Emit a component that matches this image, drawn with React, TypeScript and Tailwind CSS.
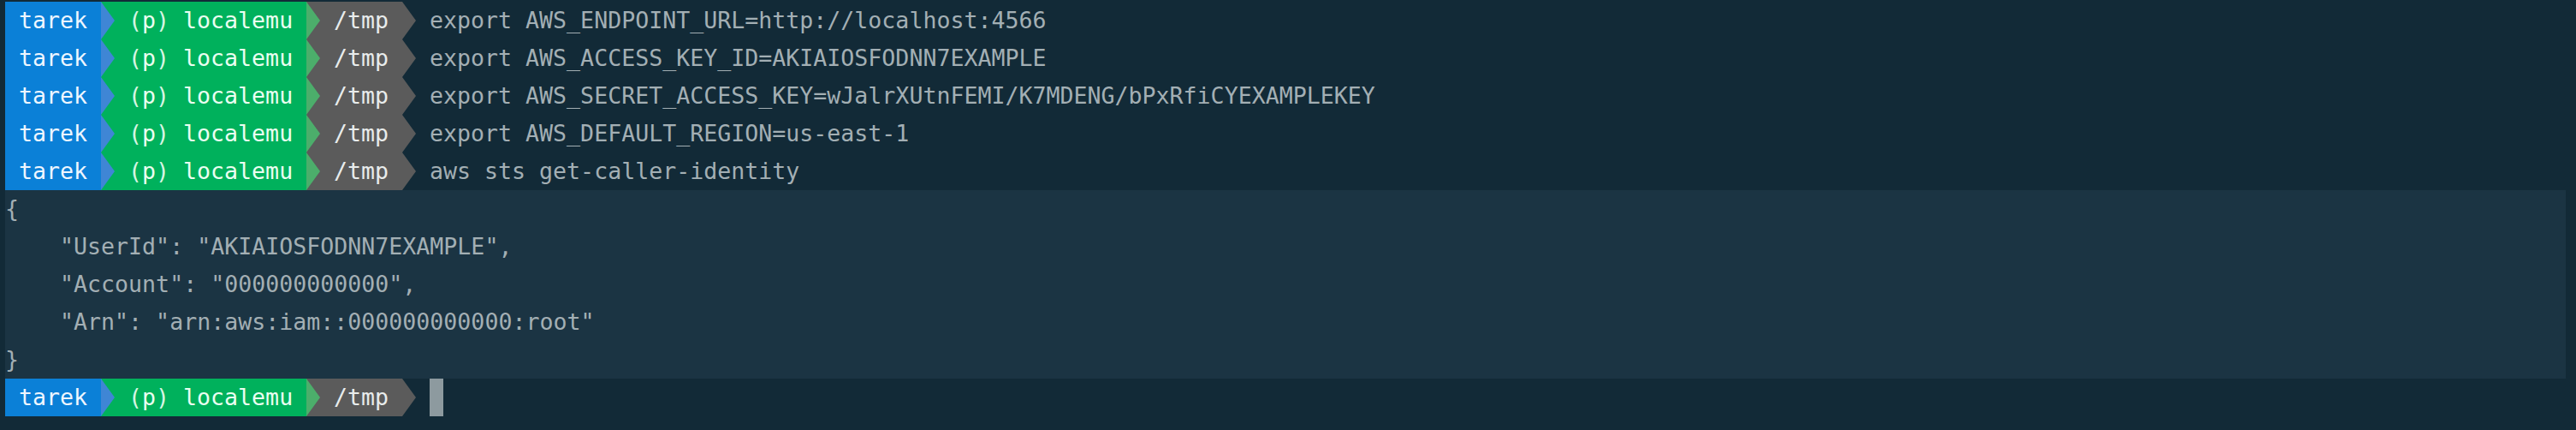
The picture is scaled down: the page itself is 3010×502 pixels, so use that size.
const commands = [
  "export AWS_ENDPOINT_URL=http://localhost:4566",
  "export AWS_ACCESS_KEY_ID=AKIAIOSFODNN7EXAMPLE",
  "export AWS_SECRET_ACCESS_KEY=wJalrXUtnFEMI/K7MDENG/bPxRfiCYEXAMPLEKEY",
  "export AWS_DEFAULT_REGION=us-east-1",
  "aws sts get-caller-identity",
];

const output = [
  "{",
  '    "UserId": "AKIAIOSFODNN7EXAMPLE",',
  '    "Account": "000000000000",',
  '    "Arn": "arn:aws:iam::000000000000:root"',
  "}",
];

// powerline separator: one cell wide, full row height
function Arrow({ fill, className }: { fill: string; className: string }) {
  return (
    <svg width="16" height="44" viewBox="0 0 16 44" className={"shrink-0 " + className}>
      <polygon points="0,0 16,22 0,44" fill={fill} />
    </svg>
  );
}

function Prompt({ children }: { children?: React.ReactNode }) {
  return (
    <div className="flex h-[44px] items-center">
      <div className="w-[112px] shrink-0 bg-[#0b80d7] pl-[16px] text-[#eef6ff]">tarek</div>
      <Arrow fill="#3f86d5" className="bg-[#00b15c]" />
      <div className="w-[224px] shrink-0 bg-[#00b15c] pl-[16px] text-[#eafff1]">
        <span className="text-[#d6f5e2]">(</span>p<span className="text-[#d6f5e2]">)</span> localemu
      </div>
      <Arrow fill="#4cae6b" className="bg-[#5b5b5b]" />
      <div className="w-[96px] shrink-0 bg-[#5b5b5b] pl-[16px] text-[#e8ecec]">/tmp</div>
      <Arrow fill="#5b5b5b" className="" />
      <div className="pl-[16px] text-[#a3afb4]">{children}</div>
    </div>
  );
}

export default function App() {
  return (
    <div
      className="h-[502px] w-[3010px] overflow-hidden bg-[#122a37] pl-[6px] pr-[12px] pt-[2px] text-[26.6px] leading-[44px] whitespace-pre"
      style={{ fontFamily: '"DejaVu Sans Mono", "Liberation Mono", monospace' }}
    >
      {commands.map((c) => (
        <Prompt key={c}>{c}</Prompt>
      ))}

      {/* command output */}
      <div className="bg-[#1b3443] text-[#a3afb4]">
        {output.map((line, i) => (
          <div key={i} className="h-[44px]">
            {line}
          </div>
        ))}
      </div>

      <Prompt>
        <div className="h-[44px] w-[16px] bg-[#8d9a9f]" />
      </Prompt>
    </div>
  );
}
